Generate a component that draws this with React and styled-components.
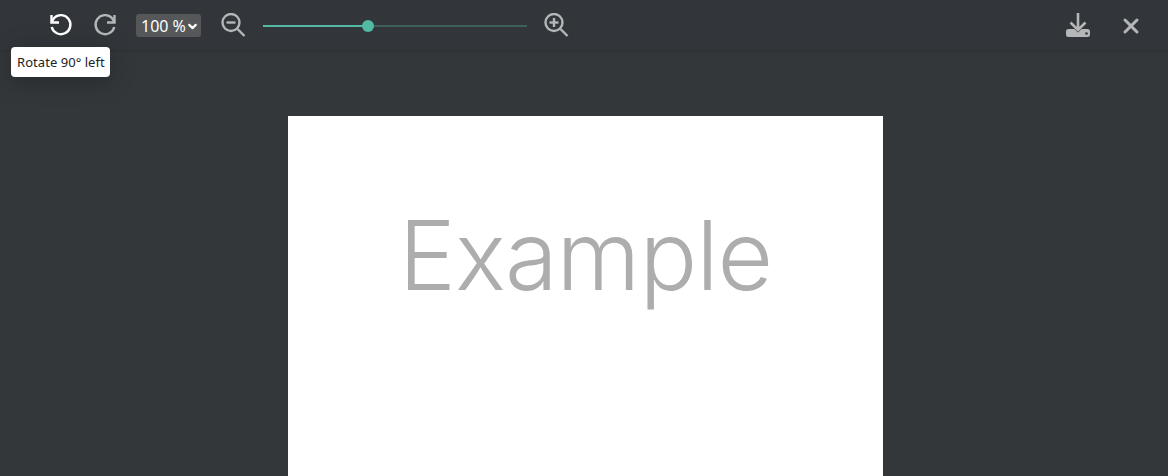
import styled, { createGlobalStyle } from "styled-components";
import { X, ChevronDown } from "lucide-react";

const GlobalStyle = createGlobalStyle`
    html, body {
        margin: 0;
        height: 100%;
        background: #33373a;
        overflow: hidden;
        font-family: "Noto Sans", sans-serif;
    }
`;

const Viewer = styled.div`
    position: relative;
    height: 476px;
    overflow: hidden;
    background: #33373a;
`;

const Toolbar = styled.div`
    display: flex;
    align-items: center;
    height: 50px;
    padding: 2px 24px 0 48px;
    box-sizing: border-box;
    background: #32363a;
    box-shadow: 0 1px 3px rgba(0, 0, 0, 0.12);
`;

const IconButton = styled.button`
    display: flex;
    align-items: center;
    justify-content: center;
    width: 26px;
    height: 26px;
    margin-left: ${(p) => p.$gap || 0}px;
    padding: 0;
    border: 0;
    background: none;
    color: ${(p) => (p.$active ? "#ffffff" : "#b4b6b8")};
`;

const ZoomSelect = styled.div`
    display: flex;
    align-items: center;
    width: 65px;
    height: 23px;
    margin: 0 0 2px 18px;
    padding: 2px 0 0 5px;
    box-sizing: border-box;
    border-radius: 3px;
    background: #555759;
    color: #ffffff;
    font-size: 16px;
    white-space: nowrap;
`;

const Slider = styled.div`
    position: relative;
    width: 264px;
    height: 2px;
    margin-left: 17px;
    background: #3e5f5b;
`;

const SliderFill = styled.div`
    height: 100%;
    background: #52b9a5;
`;

const SliderThumb = styled.div`
    position: absolute;
    top: -5px;
    width: 12px;
    height: 12px;
    margin-left: -6px;
    border-radius: 50%;
    background: #52b9a5;
`;

const Spacer = styled.div`
    flex: 1;
`;

const Tooltip = styled.div`
    position: absolute;
    top: 47px;
    left: 11px;
    padding: 0 5px 0 6px;
    height: 30px;
    line-height: 31px;
    border-radius: 4px;
    background: #ffffff;
    color: #222222;
    font-size: 13px;
    letter-spacing: 0.05px;
    white-space: nowrap;
    box-shadow: 0 4px 24px rgba(0, 0, 0, 0.25);
`;

const Stage = styled.div`
    display: flex;
    justify-content: center;
    padding: 66px 0 0 3px;
`;

const Page = styled.div`
    display: flex;
    justify-content: center;
    width: 595px;
    height: 842px;
    background: #ffffff;
`;

const PageText = styled.div`
    margin-top: 71px;
    color: #adadad;
    font-family: Inter, sans-serif;
    font-size: 96px;
    font-weight: 300;
    letter-spacing: -1px;
    line-height: 136px;
`;

const RotateSvg = styled.svg`
    transform: ${(p) => (p.$flip ? "scaleX(-1)" : "none")};
`;

const RotateIcon = ({ flip }) => (
    <RotateSvg $flip={flip} width="26" height="26" viewBox="0 0 26 26" fill="none" stroke="currentColor" strokeWidth="2.400">
        <path d="M3.700 14a9.500 9.500 0 1 0 2.400-9L3.500 9.500" />
        <path d="M3.500 2v7.500H11" />
    </RotateSvg>
);

const MagnifierIcon = ({ plus }) => (
    <svg width="26" height="26" viewBox="0 0 26 26" fill="none" stroke="currentColor" strokeWidth="2.400">
        <circle cx="11" cy="9.500" r="8.500" />
        <path d="M17.500 16l7 7" />
        <path d="M6.500 9.500h9" />
        {plus && <path d="M11 5v9" />}
    </svg>
);

const DownloadIcon = () => (
    <svg width="26" height="26" viewBox="0 0 26 26" fill="none">
        <path
            d="M3.500 16h19a2.500 2.500 0 0 1 2.500 2.500v3a2.500 2.500 0 0 1-2.500 2.500h-19A2.500 2.500 0 0 1 1 21.500v-3A2.500 2.500 0 0 1 3.500 16z"
            fill="currentColor"
        />
        <path d="M13 0v16M5.500 9.500l7.500 7.500 7.500-7.500" stroke="#33373a" strokeWidth="3.600" />
        <path d="M13 0v16M5.500 9.500l7.500 7.500 7.500-7.500" stroke="currentColor" strokeWidth="2.600" />
        <circle cx="21.500" cy="20.500" r="1.300" fill="#33373a" />
    </svg>
);

const SLIDER_VALUE = 39.6;

export default function App() {
    return (
        <>
            <GlobalStyle />
            <Viewer>
                <Toolbar>
                    <IconButton $active>
                        <RotateIcon />
                    </IconButton>
                    <IconButton $gap={18}>
                        <RotateIcon flip />
                    </IconButton>
                    <ZoomSelect>
                        100 %
                        <ChevronDown size={13} strokeWidth={4} />
                    </ZoomSelect>
                    <IconButton $gap={19}>
                        <MagnifierIcon />
                    </IconButton>
                    <Slider>
                        <SliderFill style={{ width: `${SLIDER_VALUE}%` }} />
                        <SliderThumb style={{ left: `${SLIDER_VALUE}%` }} />
                    </Slider>
                    <IconButton $gap={16}>
                        <MagnifierIcon plus />
                    </IconButton>
                    <Spacer />
                    <IconButton>
                        <DownloadIcon />
                    </IconButton>
                    <IconButton $gap={27}>
                        <X size={24} strokeWidth={3} />
                    </IconButton>
                </Toolbar>
                <Tooltip>Rotate 90° left</Tooltip>
                <Stage>
                    <Page>
                        <PageText>Example</PageText>
                    </Page>
                </Stage>
            </Viewer>
        </>
    );
}
